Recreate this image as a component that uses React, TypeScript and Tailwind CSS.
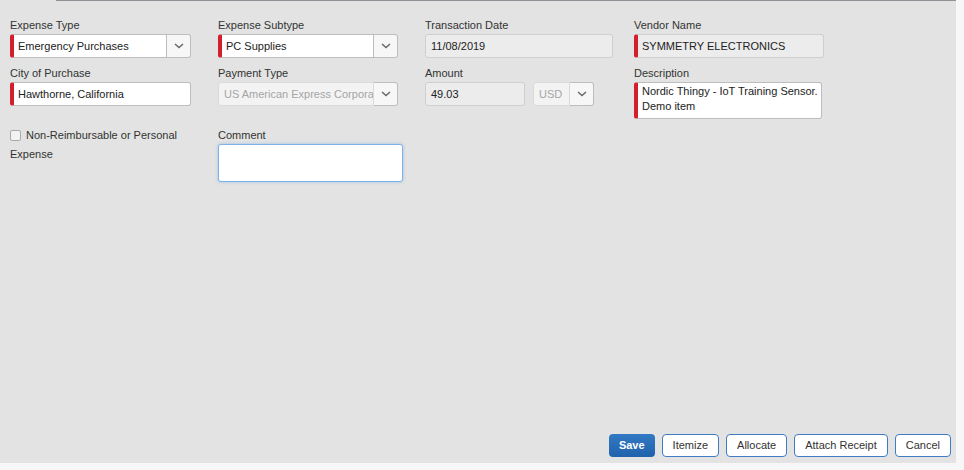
const font = "font-['Liberation_Sans',Arial,sans-serif]";

function Chevron() {
  return (
    <svg width="10" height="6" viewBox="0 0 10 6" fill="none">
      <path d="M1 1l4 3.5L9 1" stroke="#6b6b6b" strokeWidth="1.6" />
    </svg>
  );
}

function Label({ children }: { children: React.ReactNode }) {
  return <div className="h-[15px] text-[11px] leading-[13px] text-[#333]">{children}</div>;
}

function Select({
  value,
  width,
  required,
  disabled,
}: {
  value: string;
  width: string;
  required?: boolean;
  disabled?: boolean;
}) {
  return (
    <div className={`flex h-[24px] ${width}`}>
      <div
        className={`flex flex-1 items-center overflow-hidden whitespace-nowrap rounded-l-[3px] border ${
          disabled ? "border-[#dadada] bg-[#f3f3f3] text-[#a5a5a5]" : "border-[#bdbdbd] bg-white text-[#222]"
        } ${required ? "border-l-[4px] border-l-[#d11f2b] pl-[4px]" : "pl-[5px]"} text-[11px]`}
      >
        {value}
      </div>
      <div className="flex w-[24px] items-center justify-center rounded-r-[3px] border border-l-0 border-[#bdbdbd] bg-[#f7f7f7]">
        <Chevron />
      </div>
    </div>
  );
}

function Input({
  value,
  width,
  required,
  readOnly,
}: {
  value: string;
  width: string;
  required?: boolean;
  readOnly?: boolean;
}) {
  return (
    <div
      className={`flex h-[24px] items-center whitespace-nowrap rounded-[3px] border ${width} ${
        readOnly ? "border-[#cfcfcf] bg-[#ececec]" : "border-[#bdbdbd] bg-white"
      } ${required ? "border-l-[4px] border-l-[#d11f2b] pl-[4px]" : "pl-[5px]"} text-[11px] text-[#222]`}
    >
      {value}
    </div>
  );
}

function Button({ children, primary }: { children: React.ReactNode; primary?: boolean }) {
  return (
    <button
      className={`h-[23px] rounded-[4px] px-[10px] text-[11px] ${
        primary
          ? "bg-gradient-to-b from-[#3479c4] to-[#1f62ab] font-bold text-white"
          : "border border-[#3f7cc4] bg-white text-[#333]"
      }`}
    >
      {children}
    </button>
  );
}

export default function App() {
  return (
    <div className={`h-[470px] w-[964px] bg-[#f7f7f7] ${font}`}>
      <div className="flex h-[463px] w-[956px] flex-col bg-[#e2e3e2]">
        <div className="ml-[56px] h-px bg-[#8f9196]" />

        {/* Row 1 */}
        <div className="mt-[18px] flex pl-[10px]">
          <div className="w-[208px]">
            <Label>Expense Type</Label>
            <Select value="Emergency Purchases" width="w-[181px]" required />
          </div>
          <div className="w-[207px]">
            <Label>Expense Subtype</Label>
            <Select value="PC Supplies" width="w-[180px]" required />
          </div>
          <div className="w-[209px]">
            <Label>Transaction Date</Label>
            <Input value="11/08/2019" width="w-[188px]" readOnly />
          </div>
          <div>
            <Label>Vendor Name</Label>
            <Input value="SYMMETRY ELECTRONICS" width="w-[190px]" required readOnly />
          </div>
        </div>

        {/* Row 2 */}
        <div className="mt-[9px] flex pl-[10px]">
          <div className="w-[208px]">
            <Label>City of Purchase</Label>
            <Input value="Hawthorne, California" width="w-[181px]" required />
          </div>
          <div className="w-[207px]">
            <Label>Payment Type</Label>
            <Select value="US American Express Corpora" width="w-[180px]" disabled />
          </div>
          <div className="w-[209px]">
            <Label>Amount</Label>
            <div className="flex gap-[8px]">
              <Input value="49.03" width="w-[100px]" readOnly />
              <Select value="USD" width="w-[61px]" disabled />
            </div>
          </div>
          <div>
            <Label>Description</Label>
            <div className="h-[37px] w-[188px] rounded-[3px] border border-l-[4px] border-[#bdbdbd] border-l-[#d11f2b] bg-white pl-[4px] pt-[1px] text-[11px] leading-[15px] text-[#222]">
              Nordic Thingy - IoT Training Sensor.
              <br />
              Demo item
            </div>
          </div>
        </div>

        {/* Row 3 */}
        <div className="mt-[10px] flex pl-[10px]">
          <div className="-mt-[3px] w-[208px] text-[11px] leading-[19px] text-[#333]">
            <span className="mr-[5px] inline-block h-[11px] w-[11px] translate-y-[2px] rounded-[2px] border border-[#aaa] bg-[#f2f2f2]" />
            Non-Reimbursable or Personal
            <br />
            Expense
          </div>
          <div>
            <Label>Comment</Label>
            <div className="h-[38px] w-[185px] rounded-[3px] border border-[#7fb1ea] bg-white shadow-[0_0_3px_rgba(80,150,230,0.5)]" />
          </div>
        </div>

        {/* Actions */}
        <div className="mt-auto mb-[6px] flex justify-end gap-[7px] pr-[5px]">
          <Button primary>Save</Button>
          <Button>Itemize</Button>
          <Button>Allocate</Button>
          <Button>Attach Receipt</Button>
          <Button>Cancel</Button>
        </div>
      </div>
    </div>
  );
}
